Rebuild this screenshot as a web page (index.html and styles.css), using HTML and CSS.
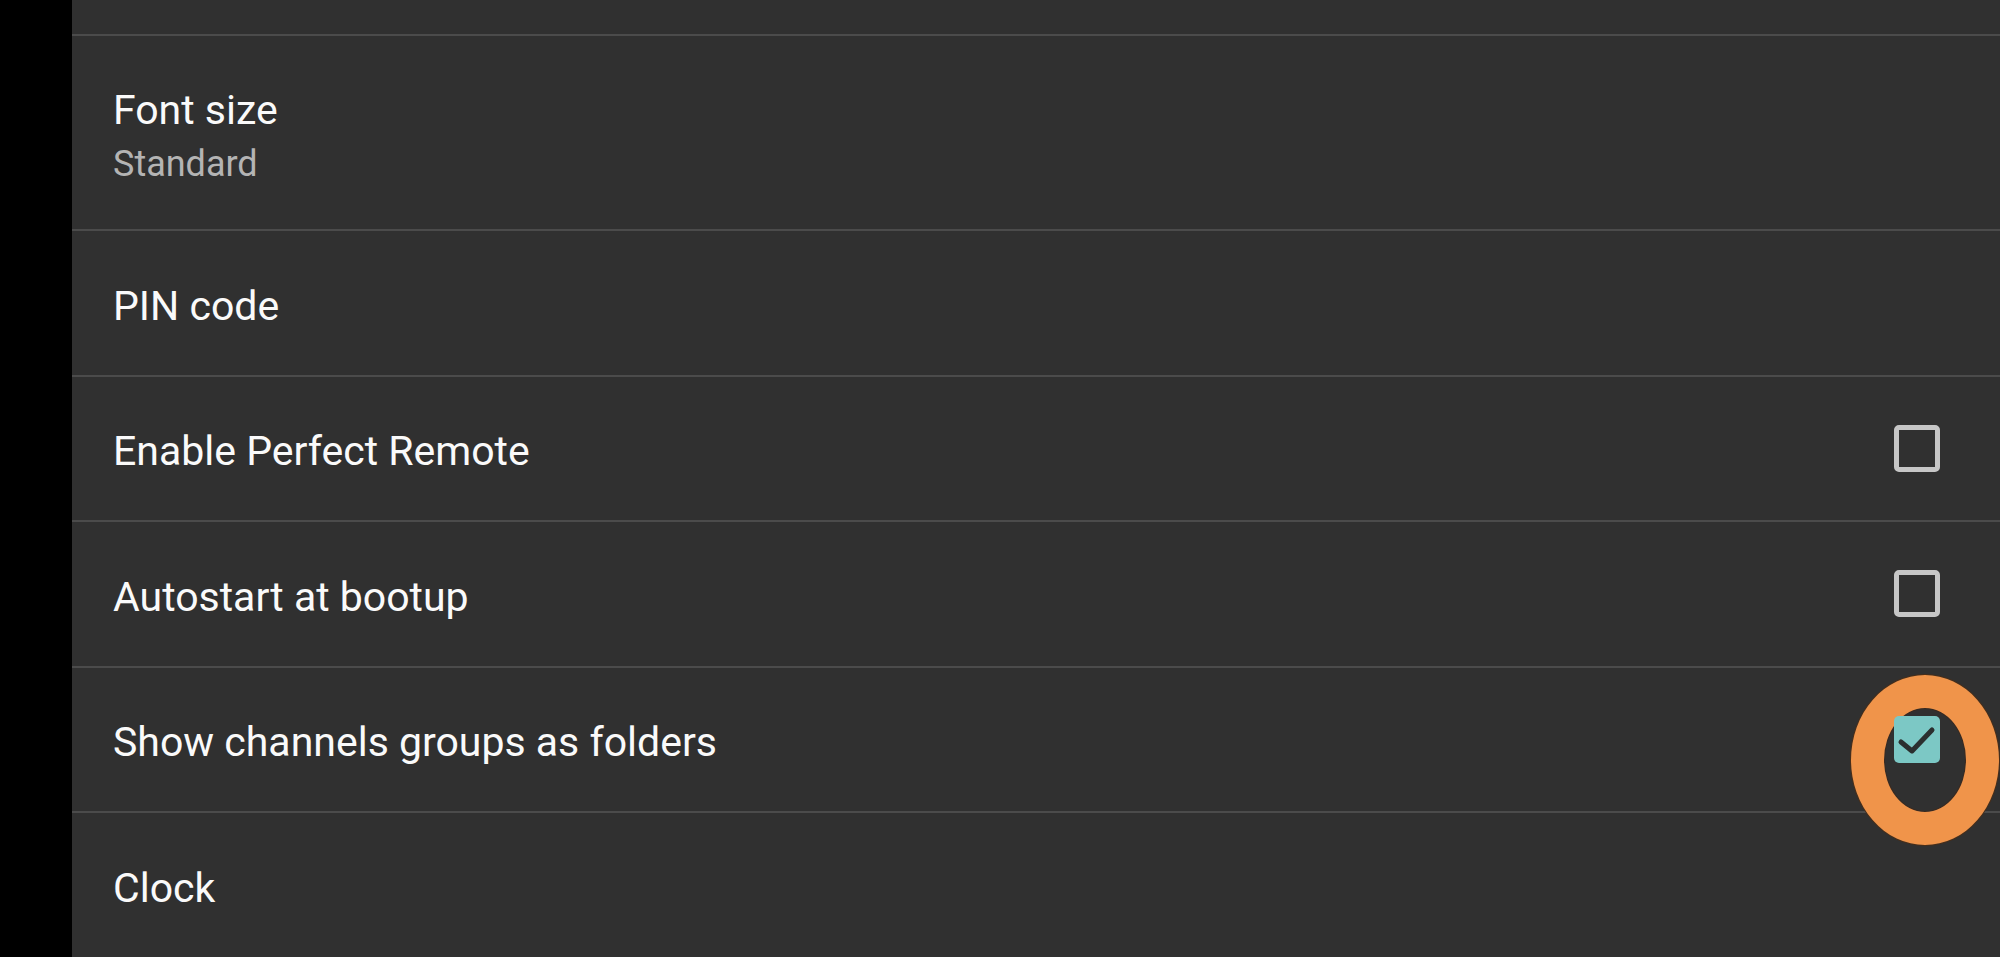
FILE: index.html
```html
<!DOCTYPE html>
<html>
<head>
<meta charset="utf-8">
<link rel="stylesheet" href="styles.css">
</head>
<body>
<div class="screen">
  <div class="side"></div>
  <div class="list">
    <div class="row row-partial"></div>
    <div class="row row-tall">
      <div class="texts">
        <div class="title">Font size</div>
        <div class="sub">Standard</div>
      </div>
    </div>
    <div class="row">
      <div class="title">PIN code</div>
    </div>
    <div class="row">
      <div class="title">Enable Perfect Remote</div>
      <div class="check"></div>
    </div>
    <div class="row">
      <div class="title">Autostart at bootup</div>
      <div class="check"></div>
    </div>
    <div class="row row-mark">
      <div class="title">Show channels groups as folders</div>
      <div class="check checked">
        <svg viewBox="0 0 45 47" width="45" height="47"><path d="M7 26 L18 35 L38 14" fill="none" stroke="#2b2f2f" stroke-width="5" stroke-linecap="round" stroke-linejoin="round"/></svg>
      </div>
      <div class="ring"></div>
    </div>
    <div class="row row-last">
      <div class="title">Clock</div>
    </div>
  </div>
</div>
</body>
</html>
```
FILE: styles.css
```css
html, body {
  margin: 0;
  padding: 0;
  background: #303030;
}
.screen {
  display: flex;
  width: 2000px;
  height: 957px;
  overflow: hidden;
  font-family: Roboto, "Liberation Sans", sans-serif;
}
.side {
  width: 72px;
  flex: none;
  background: #000;
}
.list {
  flex: 1;
  display: flex;
  flex-direction: column;
  background: #303030;
}
.row {
  position: relative;
  display: flex;
  align-items: center;
  justify-content: space-between;
  height: 143.5px;
  flex: none;
  padding: 0 60px 0 41px;
  border-bottom: 2px solid #4b4b4b;
}
.row-partial {
  height: 34px;
}
.row-tall {
  height: 193px;
}
.row-last {
  border-bottom: none;
  flex: 1;
}
.title {
  color: #fafafa;
  font-size: 41px;
  line-height: 48px;
  position: relative;
  top: 3px;
}
.texts {
  display: flex;
  flex-direction: column;
}
.texts .title {
  top: 7.5px;
}
.sub {
  color: #b4b4b4;
  font-size: 36px;
  line-height: 48px;
  margin-top: 12px;
  position: relative;
  top: 1.5px;
}
.check {
  width: 46px;
  height: 47px;
  box-sizing: border-box;
  border: 5px solid #c6c6c6;
  border-radius: 5px;
  position: relative;
  z-index: 2;
}
.check.checked {
  border: none;
  background: #7cc8c5;
}
.check svg {
  display: block;
}
.ring {
  position: absolute;
  left: 1779px;
  top: 7px;
  width: 148px;
  height: 170px;
  box-sizing: border-box;
  border: 33px solid #f0944a;
  border-radius: 50%;
  box-shadow: 0 0 0 1px #4a2e18, inset 0 0 0 1px #3a2a20;
  z-index: 1;
}
```
